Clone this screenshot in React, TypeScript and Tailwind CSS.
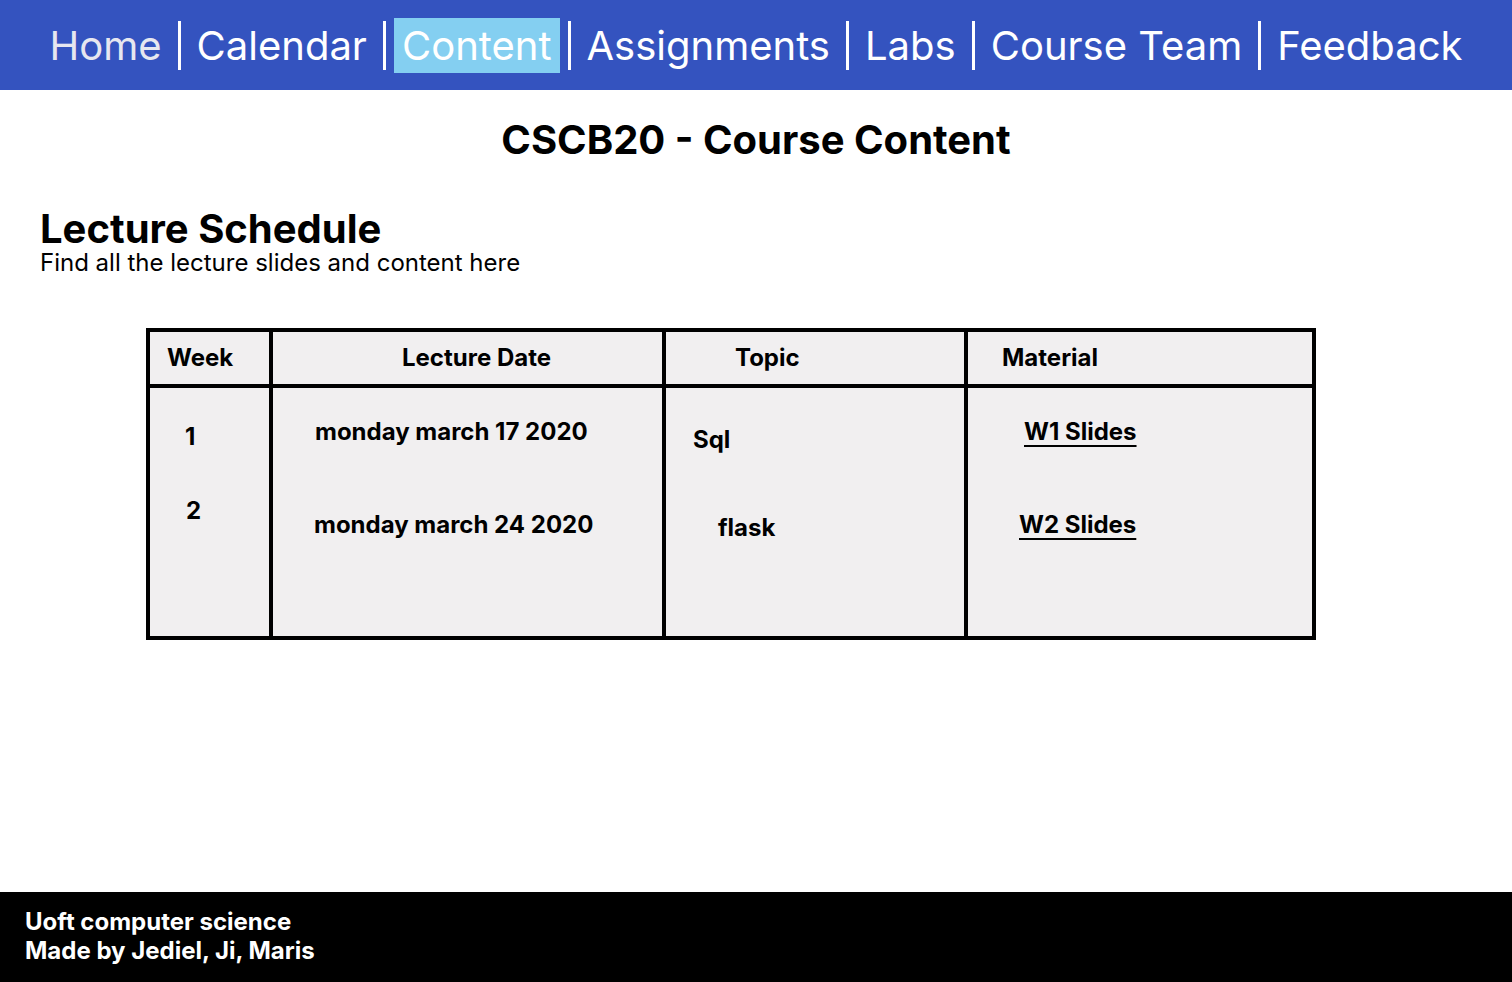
import React from "react";

const links = ["Home", "Calendar", "Content", "Assignments", "Labs", "Course Team", "Feedback"];

function NavBar() {
    return (
        <nav className="h-[90px] bg-[#3453bf] flex items-center justify-center">
            {links.map((name, i) => (
                <React.Fragment key={name}>
                    {i > 0 && <span className="mx-[8px] w-[3px] h-[49px] bg-white" />}
                    <a
                        href="#"
                        className={`px-2 h-[55px] pt-[2px] flex items-center text-[40px] font-normal ${
                            name === "Content" ? "bg-[#84cff1] text-white" : name === "Home" ? "text-[#e6e7f0]" : "text-white"
                        }`}
                    >
                        {name}
                    </a>
                </React.Fragment>
            ))}
        </nav>
    );
}

function ScheduleTable() {
    return (
        <div className="ml-[146px] w-[1170px] border-4 border-black bg-[#f1eff0]">
            {/* header row */}
            <div className="grid grid-cols-[123px_393px_302px_344px] h-[56px] border-b-4 border-black text-[24px] font-bold">
                <div className="border-r-4 border-black flex items-center pl-[17px]">Week</div>
                <div className="border-r-4 border-black flex items-center pl-[129px]">Lecture Date</div>
                <div className="border-r-4 border-black flex items-center pl-[69px]">Topic</div>
                <div className="flex items-center pl-[34px]">Material</div>
            </div>

            {/* body */}
            <div className="grid grid-cols-[123px_393px_302px_344px] h-[248px] text-[24px] font-bold leading-[28px]">
                <div className="border-r-4 border-black flex flex-col">
                    <span className="mt-[35px] pl-[35px]">1</span>
                    <span className="mt-[46px] pl-[36px]">2</span>
                </div>
                <div className="border-r-4 border-black flex flex-col">
                    <span className="mt-[30px] pl-[42px]">monday march 17 2020</span>
                    <span className="mt-[65px] pl-[41px]">monday march 24 2020</span>
                </div>
                <div className="border-r-4 border-black flex flex-col">
                    <span className="mt-[38px] pl-[27px]">Sql</span>
                    <span className="mt-[60px] pl-[52px]">flask</span>
                </div>
                <div className="flex flex-col items-start">
                    <a href="#" className="mt-[30px] ml-[56px] underline decoration-2 underline-offset-[5px]">
                        W1 Slides
                    </a>
                    <a href="#" className="mt-[65px] ml-[51px] underline decoration-2 underline-offset-[5px]">
                        W2 Slides
                    </a>
                </div>
            </div>
        </div>
    );
}

export default function App() {
    return (
        <div className="min-h-screen flex flex-col bg-white text-black font-['Inter',sans-serif]">
            <NavBar />

            <main className="flex-1">
                <h1 className="mt-[26px] text-center text-[40px] font-bold leading-[48px]">CSCB20 - Course Content</h1>

                <section className="mt-[43px] px-[40px]">
                    <h2 className="text-[40px] font-bold leading-[44px]">Lecture Schedule</h2>
                    <p className="text-[24px] leading-[24px]">Find all the lecture slides and content here</p>
                </section>

                <div className="mt-[53px]">
                    <ScheduleTable />
                </div>
            </main>

            <footer className="h-[90px] bg-black text-white px-[25px] pt-[15px]">
                <p className="text-[24px] font-bold leading-[29px]">Uoft computer science</p>
                <p className="text-[24px] font-bold leading-[29px]">Made by Jediel, Ji, Maris</p>
            </footer>
        </div>
    );
}
